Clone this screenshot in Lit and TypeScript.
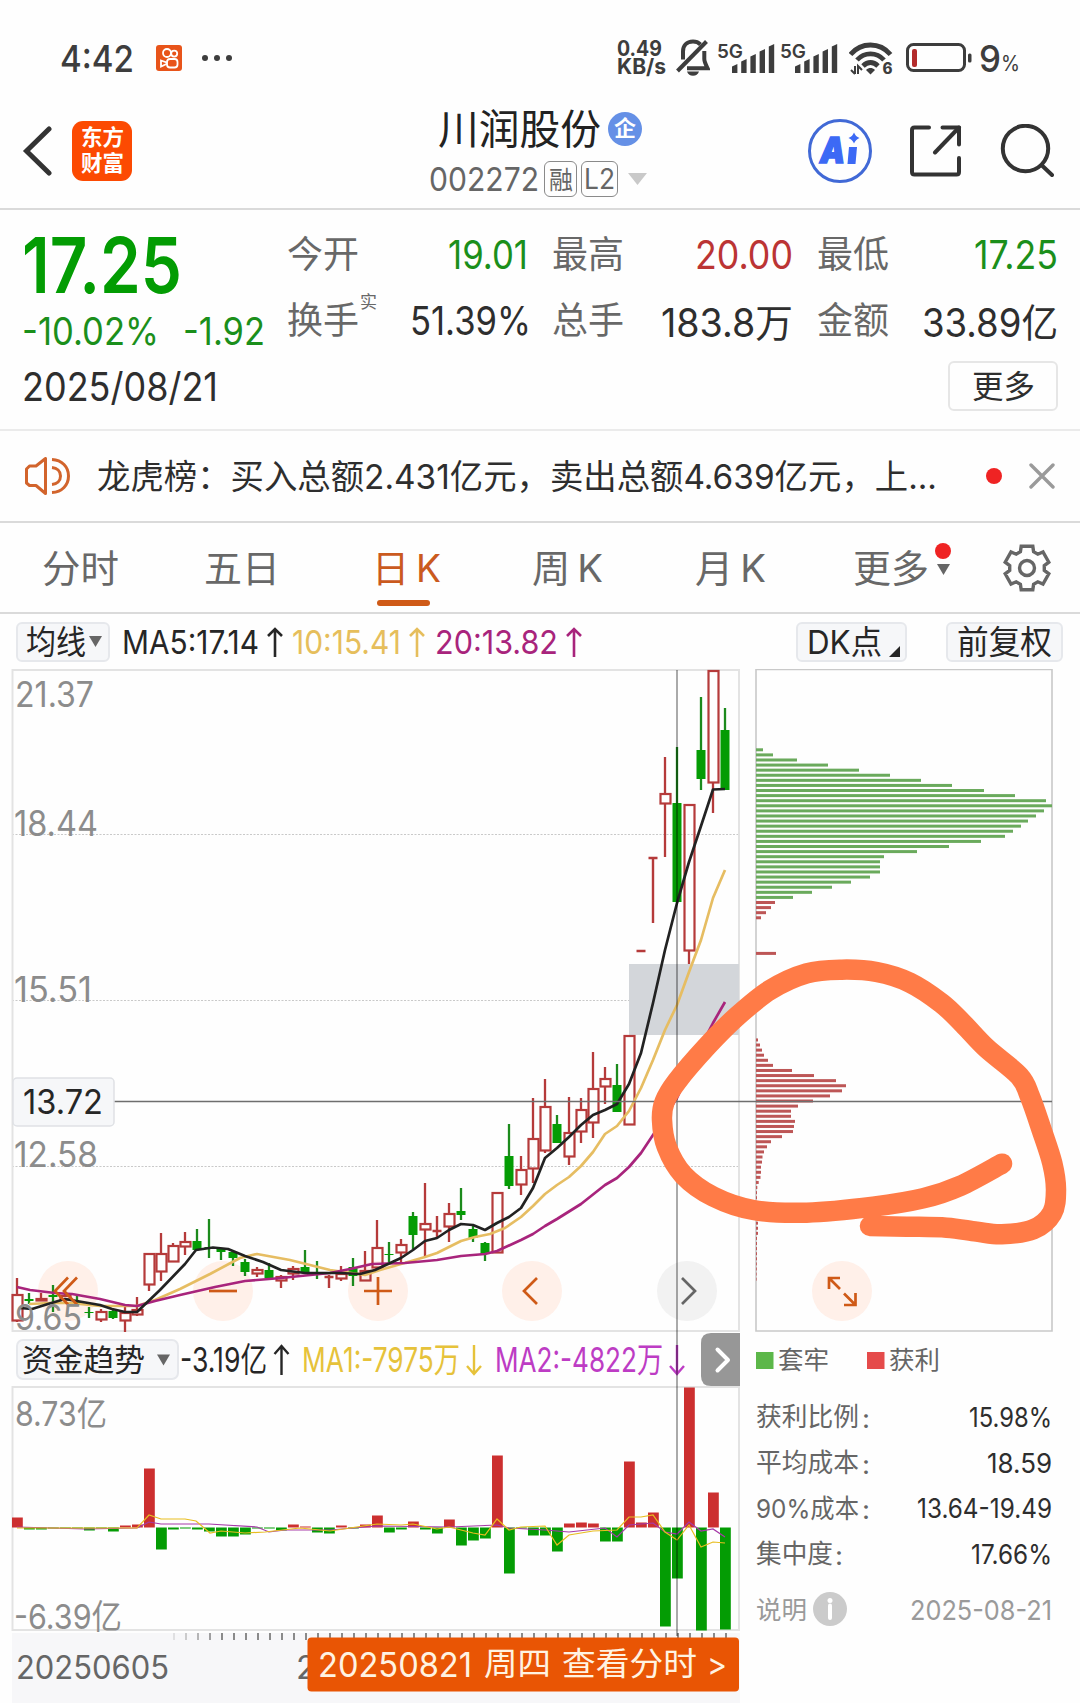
import { LitElement, html, svg, css } from "lit";
import { customElement, property } from "lit/decorators.js";

/* Single line of text condensed or widened to an exact advance width. */
@customElement("fit-text")
class FitText extends LitElement {
  static styles = css`
    :host { display: inline-block; flex: none; white-space: pre; }
    .in { display: inline-block; transform-origin: 0 50%; }
  `;
  @property({ type: Number }) w = 0;
  updated() {
    const el = this.renderRoot.querySelector(".in") as HTMLElement;
    el.style.transform = "none";
    const natural = el.getBoundingClientRect().width;
    this.style.width = this.w + "px";
    if (natural > 0) el.style.transform = `scaleX(${this.w / natural})`;
  }
  render() {
    return html`<span class="in"><slot></slot></span>`;
  }
}

type Pt = [number, number];
const line = (p: Pt[]) => p.map(([x, y]) => `${x},${y}`).join(" ");

/* Catmull-Rom spline through the given points. */
const smooth = (p: Pt[]) => {
  let d = `M${p[0][0]} ${p[0][1]}`;
  for (let i = 0; i < p.length - 1; i++) {
    const a = p[Math.max(0, i - 1)], b = p[i], c = p[i + 1], e = p[Math.min(p.length - 1, i + 2)];
    d += `C${b[0] + (c[0] - a[0]) / 6} ${b[1] + (c[1] - a[1]) / 6} ${c[0] - (e[0] - b[0]) / 6} ${c[1] - (e[1] - b[1]) / 6} ${c[0]} ${c[1]}`;
  }
  return d;
};

/* up?, high, body top, body bottom, low */
const R = 1, G = 0;
const CANDLES: number[][] = [
  [R, 1278, 1294, 1321, 1322], [G, 1293, 1299, 1301, 1304], [R, 1293, 1298, 1301, 1301], [G, 1285, 1295, 1297, 1312],
  [R, 1290, 1295, 1300, 1304], [G, 1296, 1302, 1304, 1306], [G, 1307, 1312, 1313, 1318], [R, 1309, 1311, 1320, 1322],
  [G, 1309, 1311, 1318, 1319], [R, 1307, 1312, 1321, 1332], [R, 1297, 1309, 1315, 1316], [R, 1253, 1253, 1285, 1291],
  [R, 1233, 1253, 1272, 1281], [R, 1243, 1245, 1262, 1262], [R, 1232, 1241, 1247, 1255], [G, 1229, 1241, 1250, 1250],
  [G, 1219, 1247, 1249, 1258], [G, 1248, 1249, 1252, 1260], [G, 1251, 1252, 1258, 1266], [G, 1259, 1262, 1272, 1276],
  [R, 1267, 1269, 1274, 1277], [G, 1263, 1270, 1278, 1278], [R, 1275, 1276, 1281, 1288], [R, 1266, 1268, 1274, 1280],
  [G, 1250, 1267, 1273, 1273], [G, 1261, 1273, 1275, 1279], [R, 1275, 1277, 1279, 1288], [R, 1266, 1273, 1279, 1281],
  [G, 1258, 1267, 1276, 1286], [R, 1251, 1270, 1281, 1281], [R, 1220, 1247, 1268, 1268], [G, 1242, 1254, 1255, 1262],
  [R, 1239, 1244, 1253, 1262], [G, 1212, 1216, 1235, 1249], [R, 1183, 1223, 1230, 1257], [R, 1216, 1231, 1233, 1237],
  [R, 1203, 1213, 1227, 1242], [G, 1188, 1211, 1215, 1220], [G, 1225, 1229, 1238, 1242], [G, 1242, 1243, 1254, 1261],
  [R, 1192, 1192, 1253, 1253], [G, 1124, 1156, 1186, 1189], [R, 1156, 1169, 1185, 1195], [R, 1098, 1138, 1169, 1183],
  [R, 1079, 1106, 1151, 1153], [G, 1115, 1124, 1143, 1143], [R, 1097, 1132, 1157, 1165], [R, 1098, 1109, 1132, 1143],
  [R, 1052, 1088, 1123, 1138], [R, 1067, 1078, 1087, 1104], [G, 1064, 1085, 1112, 1112], [R, 1035, 1035, 1125, 1125],
  [R, 951, 951, 952, 952], [R, 858, 858, 859, 923], [R, 757, 793, 804, 857], [G, 747, 803, 902, 902],
  [R, 804, 804, 951, 964], [G, 697, 750, 779, 790], [R, 670, 670, 783, 813], [G, 708, 730, 790, 790],
];

const MA5: Pt[] = [[20, 1308], [32, 1309], [48, 1304], [65, 1299], [100, 1305], [112, 1309], [125, 1312], [137, 1312], [160, 1290], [185, 1264], [196, 1250], [213, 1247.5], [228, 1249], [245, 1256], [263, 1262], [281, 1270], [305, 1273], [340, 1273], [360, 1274], [375, 1270], [401, 1258], [413, 1250], [425, 1241], [437, 1238], [449, 1230], [461, 1224], [473, 1225], [485, 1230], [497, 1223], [509, 1217], [521, 1208], [533, 1188], [545, 1158], [557, 1148], [569, 1137], [581, 1125], [593, 1115], [605, 1110], [617, 1104], [629, 1084], [641, 1053], [653, 1003], [665, 950], [677, 903], [689, 862], [701, 826], [713, 789.5], [725, 789]];
const MA10: Pt[] = [[29, 1304], [50, 1303], [70, 1303], [100, 1306], [137, 1306], [155, 1300], [180, 1289], [210, 1274], [240, 1258], [257, 1254], [290, 1260], [330, 1270], [365, 1275], [380, 1270], [401, 1264], [425, 1257], [437, 1253], [461, 1241], [475, 1237], [490, 1234], [505, 1228], [521, 1217], [533, 1206], [545, 1194], [557, 1185], [569, 1177], [581, 1166], [593, 1152], [605, 1134], [617, 1126], [629, 1111], [641, 1088], [653, 1060], [665, 1030], [677, 1005], [689, 972], [701, 940], [713, 898], [725, 870]];
const MA20: Pt[] = [[17, 1287], [30, 1290], [55, 1293], [72, 1294], [100, 1299], [125, 1305], [137, 1306], [155, 1301], [180, 1295], [215, 1287], [245, 1281], [281, 1278], [330, 1273], [350, 1269], [372, 1264], [405, 1263], [437, 1260], [461, 1256], [485, 1254], [497, 1251], [521, 1240], [533, 1234], [545, 1226], [557, 1219], [581, 1204], [605, 1185], [617, 1178], [629, 1167], [641, 1153], [653, 1135], [677, 1098], [701, 1046], [713, 1023], [725, 1002]];

const FLOW = [10, -2, -2, 0, -1, -1, -3, -1, -4, 2, 3, 59, -22, -2, -1, -2, -4, -9, -9, -7, 0, -1, -3, 3, 1, -5, -6, 2, -1, 3, 12, -5, -2, 6, -2, -6, 8, -18, -13, -11, 72, -46, 0, -8, -8, -24, 4, 5, 4, -14, -14, 66, 5, 15, -99, -51, 140, -103, 35, -102];
const FLOW_MA1: Pt[] = [[17, 1528], [137, 1528], [149, 1515], [161, 1519], [185, 1519], [196, 1521], [210, 1533], [221, 1531], [245, 1533], [265, 1532], [300, 1528], [330, 1531], [377, 1524], [401, 1525], [413, 1524], [437, 1529], [449, 1527], [461, 1530], [473, 1533], [485, 1535], [497, 1519], [509, 1530], [521, 1527], [545, 1526], [557, 1545], [569, 1535], [593, 1531], [617, 1530], [629, 1517], [641, 1517], [653, 1515], [665, 1532], [677, 1540], [689, 1525], [701, 1547], [713, 1542], [725, 1543]];
const FLOW_MA2: Pt[] = [[17, 1527], [85, 1529], [137, 1528], [149, 1522], [161, 1524], [209, 1524], [257, 1527], [269, 1532], [285, 1530], [330, 1530], [377, 1526], [450, 1527], [497, 1525], [509, 1528], [545, 1530], [569, 1532], [605, 1528], [617, 1537], [629, 1525], [653, 1523], [665, 1532], [677, 1534], [689, 1522], [701, 1531], [713, 1529], [725, 1537]];

/* chip distribution: [row index, length, trapped?] */
const CHIPS: number[][] = [
  ...[7, 17, 41, 72, 103, 134, 165, 196, 228, 259, 290, 296, 288, 280, 272, 265, 257, 249, 225, 193, 161, 128, 124, 124, 124, 114, 95, 76, 56, 37].map((l, i) => [i, l, 1]),
  ...[19, 15, 10, 5].map((l, i) => [30 + i, l, 0]),
  [40, 20, 0],
  ...[2, 4, 6, 8, 12, 17, 36, 58, 80, 90, 86, 74, 57, 42, 35, 35, 39, 38, 37, 26, 15, 11, 8, 6.5, 6, 5, 5, 4.5, 2.7, 1.3, 1, 1, 1, 1, 1, 1.5, 2, 2, 2, 1, 1, 1, 1, 1, 0.8, 0.8, 0.6, 0.6].map((l, i) => [57 + i, l, 0]),
];

const SCRIBBLE: Pt[] = ([[690, 828], [800, 830], [920, 833], [1010, 845], [1085, 853], [1180, 838], [1236, 790], [1248, 720], [1237, 640], [1205, 540], [1170, 440], [1138, 378], [1040, 295], [970, 222], [905, 160], [810, 98], [710, 66], [605, 59], [500, 70], [390, 120], [290, 200], [200, 290], [110, 395], [74, 455], [66, 510], [80, 590], [130, 675], [220, 740], [340, 780], [500, 788], [700, 770], [850, 745], [960, 708], [1086, 641]] as Pt[])
  .map(([x, y]) => [640 + x / 3, 950 + y / 3] as Pt);

const label = (x: number, cy: number, size: number, w: number, color: string, text: string) =>
  svg`<text x=${x} y=${cy + size * 0.364} font-size=${size} textLength=${w} lengthAdjust="spacingAndGlyphs" fill=${color}>${text}</text>`;

const gear = () => {
  const pts: string[] = [];
  for (let k = 0; k < 6; k++) {
    for (const [da, r] of [[-22, 17.5], [-15, 22.6], [15, 22.6], [22, 17.5]]) {
      const a = ((k * 60 - 90 + da) * Math.PI) / 180;
      pts.push(`${(24 + r * Math.cos(a)).toFixed(1)},${(24 + r * Math.sin(a)).toFixed(1)}`);
    }
  }
  return svg`<polygon points=${pts.join(" ")} fill="none" stroke="#666" stroke-width="3.400"/><circle cx="24" cy="24" r="7.5" fill="none" stroke="#666" stroke-width="3.400"/>`;
};

const arrow = (up: boolean) => html`<svg class="arrow ${up ? "" : "down"}" viewBox="0 0 16 30" width="16" height="30"><path d="M8 30V2M1 9L8 2L15 9" fill="none" stroke="currentColor" stroke-width="2.6"/></svg>`;
const tri = (w: number, h: number, c: string) => html`<svg class="tri" width=${w} height=${h} viewBox="0 0 10 10" preserveAspectRatio="none"><path d="M0 0H10L5 10Z" fill=${c}/></svg>`;

@customElement("app-root")
class AppRoot extends LitElement {
  static styles = css`
    :host { display: block; width: 1080px; height: 1703px; overflow: hidden; background: #fefefe; color: #2e2e2e;
      font-family: Inter, "Noto Sans CJK SC", sans-serif; }
    * { box-sizing: border-box; }
    svg { display: block; flex: none; }
    .row { display: flex; align-items: center; }
    .col { display: flex; flex-direction: column; }
    .cj { padding-bottom: 4px; }

    .status { height: 96px; padding: 20px 0 0 60px; color: #3d3d3d; }
    .clock { font-size: 37px; font-weight: 500; margin-right: 22px; }
    .kuai { margin-right: 20px; }
    .speed { margin-left: 385px; font-size: 21px; line-height: 18.5px; font-weight: 700; }
    .bell { margin-left: 10px; }
    .sim { margin-left: 7px; }
    .sim2 { margin-left: 5px; }
    .wifi { margin-left: 11px; }
    .battery { margin-left: 13px; }
    .pct { font-size: 37px; font-weight: 500; margin-left: 7px; }
    .pcts { font-size: 21px; padding-top: 10px; }

    .header { height: 114px; padding: 0 0 2px 22px; border-bottom: 2px solid #dadada; }
    .applogo { width: 60px; height: 60px; margin-left: 20px; border-radius: 11px; background: #fc4a02; color: #fff; justify-content: center;
      align-items: center; font-size: 22px; font-weight: 700; line-height: 26px; padding-bottom: 3px; }
    .titles { margin-left: 297px; width: 232px; gap: 12px; padding-top: 4px; }
    .name { font-size: 41px; line-height: 40px; color: #222; margin-left: 9px; }
    .ent { width: 34px; height: 34px; border-radius: 50%; background: #6590e6; color: #fff; font-size: 22px; font-weight: 700; line-height: 32px; text-align: center; margin-left: 7px; }
    .code { font-size: 33px; line-height: 36px; color: #666; }
    .tag { height: 36px; border: 1.5px solid #8a8a8a; border-radius: 6px; color: #666; display: flex; align-items: center; justify-content: center; }
    .tag1 { width: 33px; margin-left: 5px; font-size: 25px; padding-bottom: 3px; }
    .tag2 { width: 37px; margin-left: 4px; font-size: 28px; }
    .ml10 { margin-left: 10px; }
    .ai { margin-left: 147px; }
    .share { margin-left: 38px; }
    .search { margin-left: 38px; }

    .quote { height: 221px; border-bottom: 2px solid #ebebeb; padding: 11px 22px 0 22px; }
    .top { height: 140px; align-items: flex-start; }
    .left { width: 266px; padding-top: 9px; }
    .price { font-size: 77px; font-weight: 600; line-height: 70px; color: #039c03; }
    .chg { font-size: 38px; line-height: 40px; padding-top: 11px; gap: 24px; color: #1b8f1b; }
    .stats { display: grid; grid-template-columns: 240px 240px 240px; column-gap: 25px; grid-auto-rows: 66px; font-size: 39px; }
    .stat { display: flex; align-items: center; justify-content: space-between; }
    .k { font-size: 37px; color: #686868; margin-left: -1px; padding-bottom: 4px; }
    .sup { font-size: 17px; line-height: 20px; margin-bottom: 36px; margin-right: auto; margin-left: 1px; color: #686868; }
    .wide { margin-right: -3px; }
    .green { color: #1b8f1b; }
    .red { color: #bb3434; }
    .date { height: 50px; justify-content: space-between; font-size: 39px; }
    .btn { width: 110px; height: 50px; border: 2px solid #e6e6e6; border-radius: 6px; font-size: 31.5px; justify-content: center; }

    .news { height: 92px; border-bottom: 2px solid #dadada; padding-left: 25px; font-size: 34px; }
    .msg { margin-left: 26px; padding-bottom: 4px; }
    .dot { width: 16px; height: 16px; border-radius: 50%; background: #ef2323; flex: none; }
    .msgdot { margin-left: 49px; margin-right: 27px; }

    .tabs { height: 91px; border-bottom: 2px solid #dadada; font-size: 38px; color: #686868; padding-left: 42px; }
    .tab { height: 90px; position: relative; display: flex; align-items: center; padding-bottom: 4px; }
    .on { color: #ca5a1e; }
    .on::after { content: ""; position: absolute; left: 5px; bottom: 7px; width: 53px; height: 6px; border-radius: 3px; background: #cf5a17; }
    .moremark { align-items: center; gap: 5px; margin-left: 6px; padding-bottom: 18px; }

    .tools { height: 55px; padding-left: 16px; color: #262626; font-size: 33px; }
    .chip { height: 40px; border: 2px solid #e6e8ec; border-radius: 6px; background: #f6f7f9; color: #262626; }
    .yellow { color: #e6be5c; }
    .magenta { color: #a8247c; }
    .arrow { margin: 0 0 0 8px; }
    .down { transform: rotate(180deg); }

    .chart { position: relative; width: 1080px; height: 1034px; }
    .chart > svg { font-family: Inter, "Noto Sans CJK SC", sans-serif; }
  `;

  status() {
    const bars = svg`${[0, 1, 2, 3, 4].map((i) => svg`<path d="M${15 + i * 9.2} 33V${26.5 - i * 5}l5.4 -2.5V33Z" fill="#3d3d3d"/>`)}`;
    const sim = (c: string) => html`<svg class=${c} width="58" height="36" viewBox="0 0 58 36">
      <text x="0" y="18" font-size="19" font-weight="600" textLength="26" lengthAdjust="spacingAndGlyphs" fill="#3d3d3d">5G</text>${bars}</svg>`;
    return html`<div class="row status">
      <fit-text class="clock" w="74">4:42</fit-text>
      <svg class="kuai" width="26" height="26" viewBox="0 0 26 26"><rect width="26" height="26" rx="3" fill="#e8541a"/>
        <g fill="none" stroke="#fff" stroke-width="1.8"><circle cx="11" cy="8" r="4"/><circle cx="18.2" cy="8.6" r="3"/><rect x="11" y="14" width="10.5" height="8.5" rx="3"/><path d="M5 15.5L10.5 17.5V19L5 21.5Z"/></g></svg>
      <svg width="30" height="8" viewBox="0 0 30 8"><circle cx="3" cy="4" r="3" fill="#3d3d3d"/><circle cx="15" cy="4" r="3" fill="#3d3d3d"/><circle cx="27" cy="4" r="3" fill="#3d3d3d"/></svg>
      <div class="col speed"><fit-text w="45">0.49</fit-text><fit-text w="49">KB/s</fit-text></div>
      <svg class="bell" width="34" height="38" viewBox="0 0 34 38"><g fill="none" stroke="#3d3d3d" stroke-width="4">
        <path d="M1.5 32L30.5 2.5"/><path d="M24.5 5.5C22.5 3.6 20 2.6 17 2.6C10.500 2.600 7 7 7 12.500V20.500"/><path d="M28.300 12V20C28.300 23 30 26 31.600 29.300H11"/></g><path d="M11 32.500H23C21.800 35.500 20 36.800 17 36.800S12.200 35.500 11 32.500Z" fill="#3d3d3d"/></svg>
      ${sim("sim")}${sim("sim2")}
      <svg class="wifi" width="44" height="34" viewBox="0 0 44 34"><g fill="none" stroke="#3d3d3d" stroke-width="4.800">
        <path d="M1.500 13.500C7 7 14 4 21.500 4S36 7 41.500 13.500"/><path d="M8 19C12 14.500 16.500 12.800 21.500 12.800S31 14.500 35 19"/><path d="M14 25C16.500 22.500 18.800 21.500 21.500 21.500S26.500 22.500 29 25"/></g>
        <path d="M17 29C18.500 27.500 20 27 21.500 27S24.500 27.500 26 29L21.500 33.500Z" fill="#3d3d3d"/>
        <path d="M6 25V33M2 29L6 33M9 33V25L13 29" stroke="#3d3d3d" stroke-width="2" fill="none"/>
        <text x="33.500" y="32.500" font-size="15.500" font-weight="800" fill="#3d3d3d" textLength="10" lengthAdjust="spacingAndGlyphs">6</text></svg>
      <svg class="battery" width="66" height="30" viewBox="0 0 66 30"><rect x="1.500" y="1.500" width="57" height="26" rx="6" fill="none" stroke="#3d3d3d" stroke-width="3"/><rect x="6" y="6" width="5" height="18" rx="2" fill="#b32b2b"/><rect x="62" y="10.500" width="3.500" height="9" rx="1.500" fill="#3d3d3d"/></svg>
      <fit-text class="pct" w="22">9</fit-text><fit-text class="pcts" w="19">%</fit-text>
    </div>`;
  }

  header() {
    return html`<div class="row header">
      <svg width="30" height="50" viewBox="0 0 30 50"><path d="M27 3L4.500 25L27 47" fill="none" stroke="#333" stroke-width="5" stroke-linecap="round"/></svg>
      <div class="col applogo"><fit-text w="43">东方</fit-text><fit-text w="43">财富</fit-text></div>
      <div class="col titles">
        <div class="row"><fit-text class="name" w="163">川润股份</fit-text><span class="ent">企</span></div>
        <div class="row"><fit-text class="code" w="110">002272</fit-text><span class="tag tag1"><fit-text w="24">融</fit-text></span><span class="tag tag2"><fit-text w="31">L2</fit-text></span><span class="ml10">${tri(19, 12, "#c9c9c9")}</span></div>
      </div>
      <svg class="ai" width="64" height="64" viewBox="0 0 64 64"><circle cx="32" cy="32" r="30.500" fill="none" stroke="#4169d6" stroke-width="3"/>
        <g font-weight="900" font-style="italic" fill="#3c69f5" stroke="#3c69f5" stroke-width="1.500"><text x="12" y="44" font-size="35" textLength="25" lengthAdjust="spacingAndGlyphs">A</text><path d="M41 28H49L47.500 45H39.500Z" stroke="none"/></g>
        <path d="M46 13.500Q47.500 17.500 51.500 19Q47.500 20.500 46 24.500Q44.500 20.500 40.500 19Q44.500 17.500 46 13.500Z" fill="#3c69f5"/></svg>
      <svg class="share" width="52" height="52" viewBox="0 0 52 52"><g fill="none" stroke="#333" stroke-width="4" stroke-linecap="round" stroke-linejoin="round"><path d="M19 2.500H4.500Q2 2.500 2 5V47Q2 49.500 4.500 49.500H46.500Q49 49.500 49 47V33"/><path d="M32.500 2.500H49V19.500"/><path d="M49 2.500L25 27.500"/></g></svg>
      <svg class="search" width="54" height="54" viewBox="0 0 54 54"><g fill="none" stroke="#333" stroke-width="4" stroke-linecap="round"><circle cx="25.500" cy="24.500" r="22.700"/><path d="M42 41.500L52 51"/></g></svg>
    </div>`;
  }

  stat(k: string, v: string, w: number, c = "", sup = "") {
    return html`<div class="stat"><fit-text class="k" w="72">${k}</fit-text>${sup ? html`<span class="sup">${sup}</span>` : ""}<fit-text class=${c} w=${w}>${v}</fit-text></div>`;
  }

  quote() {
    return html`<div class="quote">
      <div class="row top">
        <div class="col left"><fit-text class="price" w="160">17.25</fit-text>
          <div class="row chg"><fit-text w="137">-10.02%</fit-text><fit-text w="82">-1.92</fit-text></div></div>
        <div class="stats">
          ${this.stat("今开", "19.01", 80, "green")}${this.stat("最高", "20.00", 98, "red")}${this.stat("最低", "17.25", 84, "green")}
          ${this.stat("换手", "51.39%", 121, "wide", "实")}${this.stat("总手", "183.8万", 132)}${this.stat("金额", "33.89亿", 136)}
        </div>
      </div>
      <div class="row date"><fit-text w="196">2025/08/21</fit-text><div class="row btn"><fit-text class="cj" w="63">更多</fit-text></div></div>
    </div>
    <div class="row news">
      <svg width="46" height="38" viewBox="0 0 46 38"><g fill="none" stroke="#d2642c" stroke-width="3" stroke-linejoin="round"><path d="M20.500 1.500V36.500L11 28.500H4.500L1.500 26V12L4.500 9H11Z"/><path d="M27 2.500C37 3 43.500 10 43.500 19S37 35 27 35.500"/><path d="M27 10.500C32 11 35.500 14 35.500 19S32 27 27 27.500"/></g></svg>
      <fit-text class="msg" w="840">龙虎榜：买入总额2.431亿元，卖出总额4.639亿元，上...</fit-text>
      <span class="dot msgdot"></span>
      <svg width="26" height="26" viewBox="0 0 26 26"><path d="M2 2L24 24M24 2L2 24" stroke="#9a9a9a" stroke-width="3.400" stroke-linecap="round"/></svg>
    </div>`;
  }

  tabs() {
    const gap = (w: number) => html`<span style="width:${w}px;flex:none"></span>`;
    return html`<div class="row tabs">
      <div class="tab"><fit-text w="77">分时</fit-text></div>${gap(85)}
      <div class="tab"><fit-text w="76">五日</fit-text></div>${gap(92)}
      <div class="tab on"><fit-text w="69">日${"\u2009"}K</fit-text></div>${gap(91)}
      <div class="tab"><fit-text w="71">周${"\u2009"}K</fit-text></div>${gap(92)}
      <div class="tab"><fit-text w="71">月${"\u2009"}K</fit-text></div>${gap(87)}
      <div class="tab"><fit-text w="76">更多</fit-text></div>
      <div class="col moremark"><span class="dot"></span>${tri(13, 11, "#666")}</div>${gap(52)}
      <svg width="48" height="48" viewBox="0 0 48 48">${gear()}</svg>
    </div>
    <div class="row tools">
      <div class="row chip" style="width:94px;padding-left:8px"><fit-text class="cj" w="60">均线</fit-text><span style="padding-left:3px">${tri(13, 11, "#666")}</span></div>
      ${gap(12)}<fit-text w="137">MA5:17.14</fit-text>${arrow(true)}
      ${gap(9)}<fit-text class="yellow" w="109">10:15.41</fit-text><span class="yellow">${arrow(true)}</span>
      ${gap(10)}<fit-text class="magenta" w="123">20:13.82</fit-text><span class="magenta">${arrow(true)}</span>
      ${gap(214)}<div class="row chip" style="width:111px;padding-left:9px"><fit-text class="cj" w="75">DK点</fit-text>
        <svg width="20" height="36" viewBox="0 0 20 36"><path d="M18 22V33H7Z" fill="#262626"/></svg></div>
      ${gap(39)}<div class="row chip" style="width:117px;padding-left:9px"><fit-text class="cj" w="95">前复权</fit-text></div>
    </div>`;
  }

  chart() {
    const disc = (x: number, c = "#fff0e9") => svg`<circle cx=${x} cy="1291" r="30" fill=${c}/>`;
    const ic = (d: string, c = "#cf5a17") => svg`<path d=${d} fill="none" stroke=${c} stroke-width="2.700"/>`;
    const candle = (c: number[], i: number) => {
      const x = 17 + i * 12;
      const [up, hi, top, bot, lo] = c;
      if (!up) return svg`<path d="M${x} ${hi}V${lo}" stroke="#1c8a1c" stroke-width="2.300"/><rect x=${x - 4.5} y=${top} width="9" height=${bot - top} fill="#049c04"/>`;
      if (bot - top < 3) return svg`<path d="M${x} ${hi}V${lo}M${x - 4.5} ${top}h9" stroke="#b53a3a" stroke-width="2.400"/>`;
      return svg`<path d="M${x} ${hi}V${top}M${x} ${bot}V${lo}" stroke="#b53a3a" stroke-width="2.300"/><rect x=${x - 4.5} y=${top + 1} width="10" height=${bot - top - 1.5} fill="none" stroke="#b53a3a" stroke-width="2.200"/>`;
    };
    const row = (cy: number, k: string, kw: number, v: string, vw: number) =>
      svg`${label(756, cy, 26, kw, "#666", k)}${label(1052 - vw, cy, 27, vw, "#2e2e2e", v)}`;
    const down = (x: number, c: string) => svg`<path d="M${x} 1345V1374M${x - 7} 1366L${x} 1374L${x + 7} 1366" fill="none" stroke=${c} stroke-width="2.400"/>`;
    return html`<div class="chart"><svg width="1080" height="1034" viewBox="0 669 1080 1034">
      <g stroke="#c9c9c9" stroke-width="1" stroke-dasharray="2 1.500"><path d="M12 834.500H739M12 1000.500H739M12 1166.500H739"/></g>
      <g fill="none" stroke="#e3e3e3" stroke-width="2"><path d="M12.500 670V1331H739V670Z"/><path d="M12.500 1387V1630H739V1387Z"/></g>
      <path d="M756 669.500V1331H1052V669.500Z" fill="none" stroke="#c9c9c9" stroke-width="1.600"/>
      <rect x="629" y="964" width="110" height="71" fill="#d3d6da"/>
      ${disc(68)}${disc(223)}${disc(378)}${disc(532)}${disc(687, "#f2f2f2")}${disc(842)}
      ${CANDLES.map(candle)}
      ${CHIPS.map(([i, l, t]) => svg`<rect x="756" y=${748.3 + i * 5.09} width=${l} height="3" fill=${t ? "#6aaa5c" : "#bd5656"}/>`)}
      <g fill="none" stroke-width="2.700" stroke-linejoin="round"><polyline points=${line(MA10)} stroke="#e6bd62"/><polyline points=${line(MA20)} stroke="#a8247c"/><polyline points=${line(MA5)} stroke="#222"/></g>
      ${ic("M68 1277.500L55 1291L68 1304.500M77 1277.500L64 1291L77 1304.500")}${ic("M209 1291H237")}${ic("M364 1291H392M378 1277V1305")}${ic("M537 1278L524 1291L537 1304")}${ic("M682 1278L695 1291L682 1304", "#666")}
      ${ic("M840 1278H829V1289M829 1278L840 1289M844 1305H855.500V1293M855.500 1305L844 1293.500")}
      ${label(15, 694.500, 35, 79, "#8c8c8c", "21.37")}${label(14, 823, 35, 84, "#8c8c8c", "18.44")}${label(14, 989, 35, 78, "#8c8c8c", "15.51")}${label(14, 1154.500, 35, 84, "#8c8c8c", "12.58")}${label(15, 1317, 35, 67, "#8c8c8c", "9.65")}

      ${FLOW.map((v, i) => svg`<rect x=${12 + i * 12} y=${v > 0 ? 1527.5 - v : 1527.5} width="10.800" height=${Math.max(1, Math.abs(v))} fill=${v > 0 ? "#cc2f2f" : "#049c04"}/>`)}
      <polyline points=${line(FLOW_MA2)} fill="none" stroke="#a63aa8" stroke-width="1.200"/><polyline points=${line(FLOW_MA1)} fill="none" stroke="#e8bd20" stroke-width="1.200"/>
      ${label(15, 1414, 34, 92, "#8c8c8c", "8.73亿")}${label(14, 1616.500, 34, 108, "#8c8c8c", "-6.39亿")}

      <rect x="17" y="1340" width="161" height="39" rx="6" fill="#f6f7f9" stroke="#e6e8ec" stroke-width="2"/>
      ${label(22, 1359.500, 31, 123, "#262626", "资金趋势")}<path d="M157 1354.500H170L163.500 1365.500Z" fill="#666"/>
      ${label(180, 1360, 34, 87, "#262626", "-3.19亿")}<path d="M281.500 1375V1346M274.500 1354L281.500 1346L288.500 1354" fill="none" stroke="#262626" stroke-width="2.400"/>
      ${label(302, 1360, 34, 158, "#e6c23a", "MA1:-7975万")}${down(474, "#e6c23a")}
      ${label(495, 1360, 34, 168, "#bd3cc4", "MA2:-4822万")}${down(677, "#bd3cc4")}
      <path d="M740 1333H711Q701 1333 701 1343V1376Q701 1386 711 1386H740Z" fill="#979797"/><path d="M717.500 1349.500L728 1360L717.500 1370.500" fill="none" stroke="#fff" stroke-width="4" stroke-linecap="round" stroke-linejoin="round"/>

      <rect x="12" y="1633" width="728" height="70" fill="#f7f7f9"/>
      ${Array.from({ length: 47 }, (_, j) => svg`<path d="M${174 + j * 12} 1633v7" stroke="#8a8a8a" stroke-width="2" opacity=${Math.min(1, 0.2 + j * 0.2)}/>`)}
      ${label(16, 1667.500, 32, 153, "#666", "20250605")}${label(296, 1667.500, 32, 20, "#666", "2")}
      <rect x="307.500" y="1637.500" width="431.500" height="54" rx="4" fill="#e95504"/>
      ${label(318, 1665, 34, 154, "#fff3e2", "20250821")}${label(484, 1663.500, 32, 67, "#fff3e2", "周四")}${label(562, 1663.500, 32, 135, "#fff3e2", "查看分时")}${label(707, 1664, 32, 20, "#fff3e2", ">")}

      <path d="M677 670V1636" stroke="#000" stroke-opacity=".33" stroke-width="2"/><path d="M113 1101.500H1052" stroke="#6e6e6e" stroke-width="1.300"/>
      <rect x="13" y="1078" width="101" height="48" rx="4" fill="#f6f7f9" stroke="#dfe1e5" stroke-width="1.500"/>${label(23, 1101.500, 34, 80, "#262626", "13.72")}

      <rect x="756" y="1352" width="17.500" height="17" fill="#5cb749"/>${label(778, 1359.500, 25.500, 51, "#666", "套牢")}
      <rect x="867" y="1352" width="17.500" height="17" fill="#e54b4b"/>${label(889, 1359.500, 25.500, 51, "#666", "获利")}
      ${row(1417, "获利比例", 103, "15.98%", 83)}${row(1463, "平均成本", 103, "18.59", 65)}${row(1508.500, "90%成本", 103, "13.64-19.49", 135)}${row(1554, "集中度", 77, "17.66%", 81)}
      ${[[867, 1417.5], [867, 1463], [867, 1508.5], [840, 1554]].map(([x, y]) => label(x - 5, y + 1.5, 26, 8, "#666", ":"))}
      ${label(756, 1609.500, 25.500, 51, "#9a9a9a", "说明")}<circle cx="830" cy="1609" r="17" fill="#cbcbcb"/><circle cx="830" cy="1600.500" r="2.500" fill="#fff"/><path d="M830 1605.500V1618" stroke="#fff" stroke-width="4" stroke-linecap="round"/>
      ${label(910, 1610.500, 26.500, 142, "#9a9a9a", "2025-08-21")}

      <path d=${smooth(SCRIBBLE)} fill="none" stroke="#ff7b47" stroke-width="20.500" stroke-linecap="round" stroke-linejoin="round"/>
    </svg></div>`;
  }

  render() {
    return html`${this.status()}${this.header()}${this.quote()}${this.tabs()}${this.chart()}`;
  }
}
